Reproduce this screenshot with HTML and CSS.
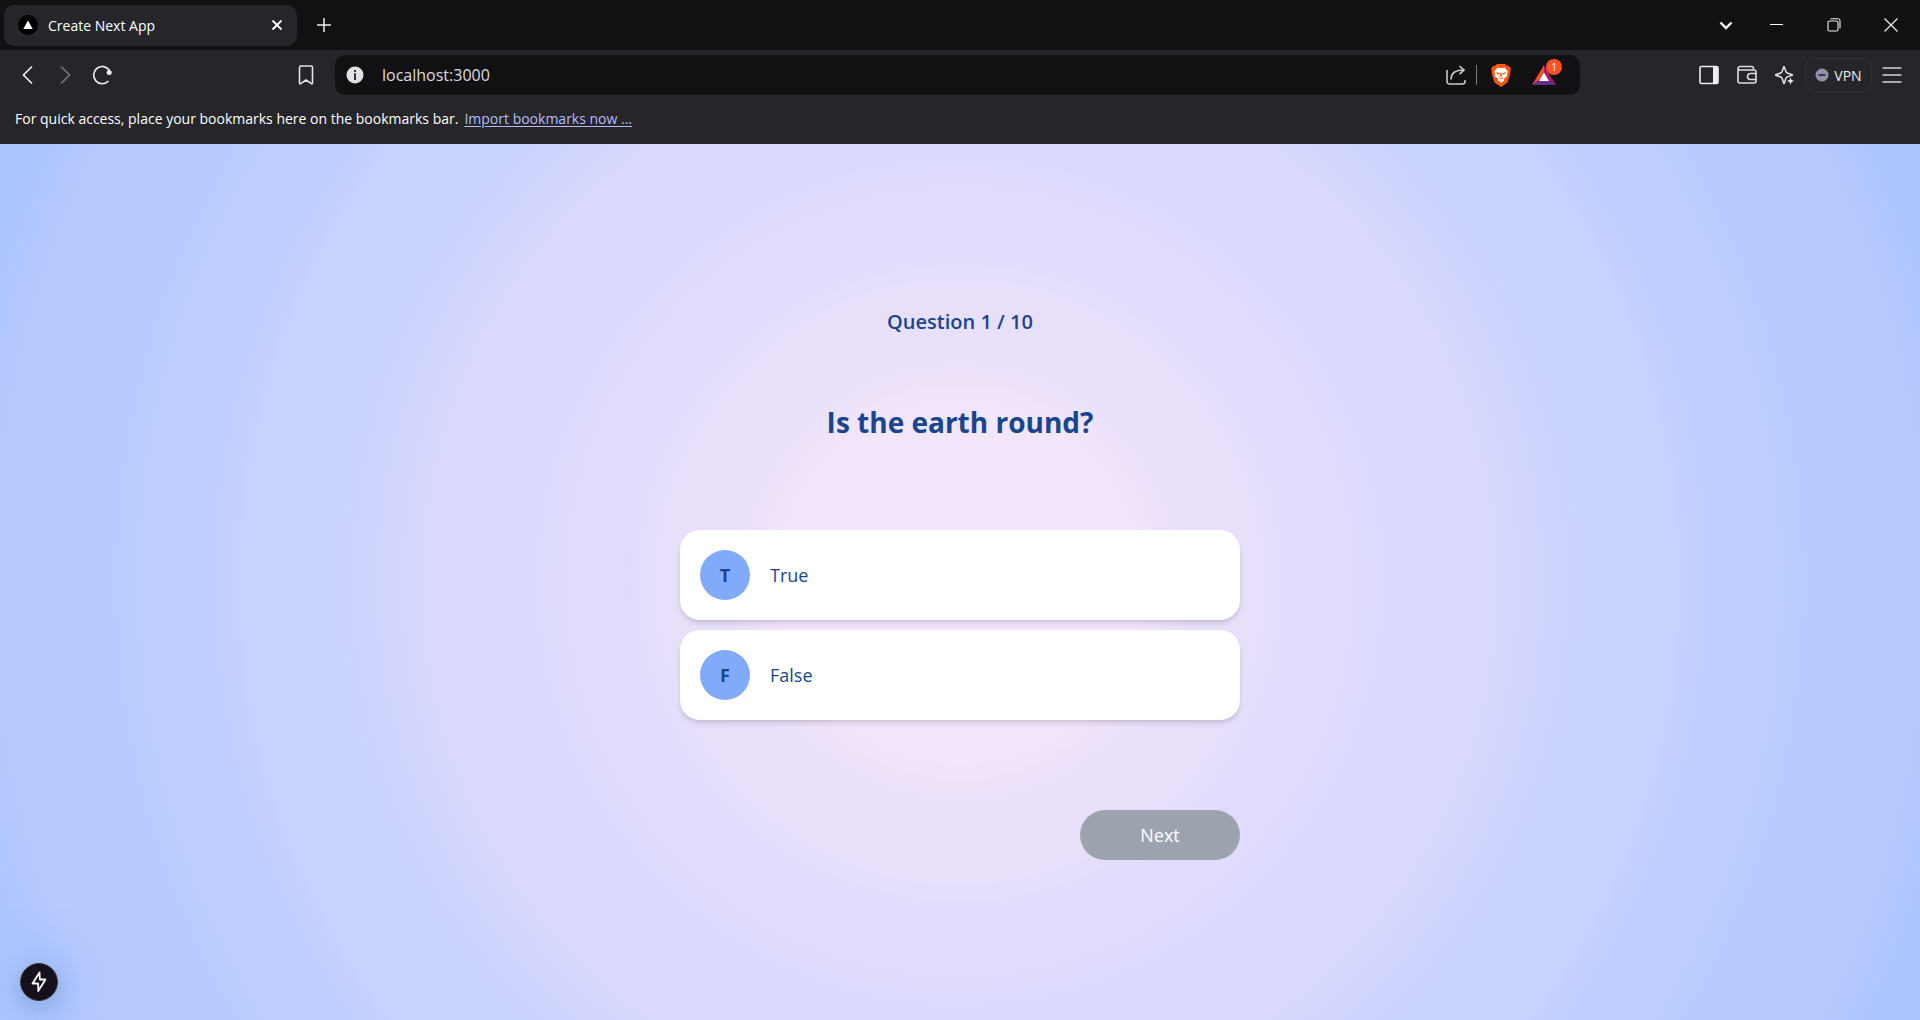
FILE: index.html
```html
<!DOCTYPE html>
<html lang="en">
<head>
<meta charset="utf-8">
<meta name="viewport" content="width=device-width, initial-scale=1">
<title>Create Next App</title>
<link rel="stylesheet" href="styles.css">
</head>
<body>
<header class="browser">
  <div class="tabstrip">
    <div class="tab">
      <svg class="favicon" width="20" height="20" viewBox="0 0 20 20"><circle cx="10" cy="10" r="10" fill="#000"/><path d="M10 5.500l4.700 8.500H5.300z" fill="#fff"/></svg>
      <span class="tab-title">Create Next App</span>
      <button class="icon-btn tab-close" aria-label="Close tab"><svg width="12" height="12" viewBox="0 0 12 12"><path d="M1.500 1.500l9 9m0-9l-9 9" stroke="#fff" stroke-width="1.800"/></svg></button>
    </div>
    <button class="icon-btn new-tab" aria-label="New tab"><svg width="14" height="14" viewBox="0 0 14 14"><path d="M7 0v14M0 7h14" stroke="#eee" stroke-width="1.500"/></svg></button>
    <div class="window-controls">
      <button class="icon-btn tab-search" aria-label="Search tabs"><svg width="14" height="14" viewBox="0 0 14 14"><path d="M1.500 4.500L7 10l5.500-5.500" fill="none" stroke="#fff" stroke-width="2.400"/></svg></button>
      <button class="icon-btn" aria-label="Minimize"><svg width="14" height="14" viewBox="0 0 14 14"><path d="M0 6.500h13" stroke="#fff"/></svg></button>
      <button class="icon-btn" aria-label="Restore"><svg width="14" height="14" viewBox="0 0 14 14"><g fill="none" stroke="#eee" stroke-width="1.100"><rect x="1" y="3" width="10" height="10" rx="1.500"/><path d="M3.500.8H11a2 2 0 0 1 2 2v7.700"/></g></svg></button>
      <button class="icon-btn" aria-label="Close window"><svg width="14" height="14" viewBox="0 0 14 14"><path d="M.5.5l13 13m0-13l-13 13" stroke="#eee" stroke-width="1.200"/></svg></button>
    </div>
  </div>
  <div class="toolbar">
    <nav class="nav-buttons">
      <button class="icon-btn" aria-label="Back"><svg width="20" height="20" viewBox="0 0 20 20"><path d="M14 1.500L5.500 10l8.500 8.500" fill="none" stroke="#eee" stroke-width="1.700"/></svg></button>
      <button class="icon-btn" aria-label="Forward"><svg width="20" height="20" viewBox="0 0 20 20"><path d="M6 1.500L14.500 10 6 18.500" fill="none" stroke="#757579" stroke-width="1.700"/></svg></button>
      <button class="icon-btn" aria-label="Reload"><svg width="20" height="20" viewBox="0 0 20 20"><path d="M17.500 5.500A8.600 8.600 0 1 0 16.500 16" fill="none" stroke="#eee" stroke-width="1.600"/><circle cx="17.200" cy="7.500" r="2.500" fill="#eee"/></svg></button>
    </nav>
    <button class="icon-btn bookmark" aria-label="Bookmark this page"><svg width="16" height="20" viewBox="0 0 16 20"><path d="M3 1h10a1.500 1.500 0 0 1 1.500 1.500v15.700a.7.7 0 0 1-1.100.5L8 15l-5.400 3.700a.7.700 0 0 1-1.100-.5V2.500A1.500 1.500 0 0 1 3 1z" fill="none" stroke="#e4e4e6" stroke-width="1.600"/></svg></button>
    <div class="address">
      <svg width="18" height="18" viewBox="0 0 18 18"><circle cx="9" cy="9" r="8.500" fill="#e2e2e6"/><path d="M8 4h2v2H8zM8 7.300h2V14H8z" fill="#333"/></svg>
      <input class="url" type="text" aria-label="Address" value="localhost:3000">
      <button class="icon-btn" aria-label="Share"><svg width="20" height="20" viewBox="0 0 20 20"><g fill="none" stroke="#c9cacc" stroke-width="1.600"><path d="M1 5v11.500A2.500 2.500 0 0 0 3.500 19h13a2.500 2.500 0 0 0 2.500-2.500V15"/><path d="M5 14.500C5 8.500 9 5 17.500 5M13.500 1l4.500 4-4.500 4.200"/></g></svg></button>
      <span class="divider"></span>
      <button class="icon-btn shield" aria-label="Brave Shields"><svg width="20" height="23" viewBox="0 0 20 23"><path d="M6 0h8l2 2 2-.3L20 5l-.8 2 .3 2-3 9.500L10 23l-6.500-4.500L.5 9l.3-2L0 5l2-3.300L4 2z" fill="#fb5411"/><path d="M6.500 3.600L10 4.200l3.500-.6 3.300 4-.8 2.500.3 1.800-3.300 2.800.2 1.800L10 18.700l-3.200-2.200.2-1.800-3.300-2.800.3-1.800-.8-2.500z" fill="#fff"/><path d="M4.700 8l4 1.200-.3 1.300-1.900-.3zM15.300 8l-4 1.200.3 1.300 1.900-.3zM9.400 9h1.200l.5 3.500H8.900zM7.500 13l2.500 1.200 2.500-1.200-.5 1.200-2 1-2-1z" fill="#fb5411"/></svg></button>
      <button class="icon-btn rewards" aria-label="Brave Rewards, 1 notification"><svg width="24" height="20" viewBox="0 0 24 20"><path d="M12 0L0 20l12-8z" fill="#ff4a24"/><path d="M12 0l12 20-12-8z" fill="#9e1f63"/><path d="M0 20l7-5h10l7 5z" fill="#662d91"/><path d="M12 7.500L17 16H7z" fill="#fff"/></svg><span class="badge">1</span></button>
    </div>
    <div class="tools">
      <button class="icon-btn" aria-label="Sidebar"><svg width="20" height="20" viewBox="0 0 20 20"><rect x="1" y="1.500" width="18" height="17" rx="1.500" fill="none" stroke="#eee" stroke-width="1.600"/><path d="M14 1.500h5v17h-5z" fill="#eee"/></svg></button>
      <button class="icon-btn" aria-label="Wallet"><svg width="20" height="20" viewBox="0 0 20 20"><g fill="none" stroke="#dedee0" stroke-width="1.600"><path d="M16.500 5V3.200A1.700 1.700 0 0 0 14.800 1.500H3A2 2 0 0 0 1 3.500V16a2 2 0 0 0 2 2h14a2 2 0 0 0 2-2V7a2 2 0 0 0-2-2H3a2 2 0 0 1-2-1.500"/><path d="M19 8.500h-5.500a3 3 0 0 0 0 6H19"/></g></svg></button>
      <button class="icon-btn" aria-label="Leo AI"><svg width="20" height="20" viewBox="0 0 20 20"><path d="M9 1.500c.8 0 1 4.500 2.500 6S17.500 9 17.500 10s-4.500 1-6 2.500-1.700 6-2.500 6-1-4.500-2.500-6-6-1.500-6-2.500 4.500-1 6-2.500 1.700-6 2.500-6z" fill="none" stroke="#e4e4e6" stroke-width="1.600"/><circle cx="15.500" cy="16" r="4.300" fill="#25252a"/><path d="M15.500 12.500l1 2.500 2.700 1-2.700 1-1 2.700-1-2.700-2.700-1 2.700-1z" fill="#eee"/></svg></button>
      <button class="vpn"><svg width="14" height="14" viewBox="0 0 14 14"><circle cx="7" cy="7" r="6.500" fill="#9192aa"/><path d="M3.500 7h7" stroke="#25252a" stroke-width="1.600"/></svg>VPN</button>
      <button class="icon-btn" aria-label="Menu"><svg width="20" height="20" viewBox="0 0 20 20"><path d="M.5 3h19M.5 10h19M.5 17h19" stroke="#d4d4d6" stroke-width="1.700"/></svg></button>
    </div>
  </div>
  <div class="bookmarks-bar">
    <span>For quick access, place your bookmarks here on the bookmarks bar.</span>
    <a href="#import">Import bookmarks now ...</a>
  </div>
</header>
<main class="quiz">
  <form class="quiz-form">
    <p class="progress">Question 1 / 10</p>
    <h1 class="question">Is the earth round?</h1>
    <div class="answers">
      <button type="button" class="answer"><span class="letter">T</span><span>True</span></button>
      <button type="button" class="answer"><span class="letter">F</span><span>False</span></button>
    </div>
    <button type="button" class="next" disabled>Next</button>
  </form>
  <button class="dev-indicator" aria-label="Next.js dev tools"><svg width="16" height="22" viewBox="0 0 16 22"><path d="M8.500 1.500L1.500 12.500h5.700v7.500L14.500 8.500H8.800z" fill="none" stroke="#fff" stroke-width="1.800" stroke-linejoin="round"/></svg></button>
</main>
</body>
</html>
```
FILE: styles.css
```css
* {
  box-sizing: border-box;
}

body {
  margin: 0;
  min-height: 100vh;
  display: flex;
  flex-direction: column;
  font-family: "Open Sans", "Noto Sans", sans-serif;
}

button {
  font: inherit;
  border: 0;
  padding: 0;
  cursor: pointer;
}

.icon-btn {
  display: flex;
  align-items: center;
  justify-content: center;
  background: none;
}

/* Browser chrome */
.browser {
  background: #25252a;
  color: #fff;
  font-size: 14px;
}

.tabstrip {
  display: flex;
  align-items: center;
  height: 50px;
  padding: 0 4px;
  background: #111113;
}

.tab {
  display: flex;
  align-items: center;
  gap: 10px;
  width: 293px;
  height: 41px;
  padding: 0 14px;
  border-radius: 10px;
  background: #25252a;
}

.tab-title {
  flex: 1;
}

.new-tab {
  margin-left: 20px;
}

.window-controls {
  display: flex;
  gap: 43px;
  margin-left: auto;
  padding-right: 18px;
}

.tab-search {
  margin-right: -6px;
}

.toolbar {
  display: flex;
  align-items: center;
  height: 50px;
  padding: 0 18px;
}

.nav-buttons {
  display: flex;
  gap: 17px;
}

.bookmark {
  margin-left: 186px;
}

.address {
  display: flex;
  align-items: center;
  flex: 1;
  height: 40px;
  margin-left: 21px;
  padding: 0 24px 0 11px;
  border-radius: 10px;
  background: #111113;
}

.url {
  flex: 1;
  min-width: 0;
  margin-left: 18px;
  padding: 0;
  border: 0;
  background: none;
  color: #dcdcde;
  font: inherit;
  font-size: 16px;
}

.divider {
  width: 1px;
  height: 20px;
  margin: 0 14px 0 10px;
  background: #77777b;
}

.rewards {
  position: relative;
  margin-left: 21px;
}

.badge {
  position: absolute;
  top: -6px;
  right: -6px;
  width: 16px;
  border-radius: 8px;
  background: #ff5028;
  color: #fff;
  font-size: 10px;
  line-height: 16px;
}

.tools {
  display: flex;
  align-items: center;
  gap: 18px;
  margin-left: 119px;
}

.vpn {
  display: flex;
  align-items: center;
  justify-content: center;
  gap: 5px;
  width: 67px;
  height: 34px;
  margin: 0 -8px;
  border: 1px solid #313136;
  border-radius: 10px;
  background: none;
  color: #eee;
}

.bookmarks-bar {
  display: flex;
  gap: 6px;
  height: 44px;
  padding: 0 15px;
  line-height: 38px;
}

.bookmarks-bar a {
  color: #b4bcfb;
  text-underline-offset: 2px;
}

/* Quiz page */
.quiz {
  position: relative;
  flex: 1;
  display: flex;
  justify-content: center;
  align-items: center;
  background: radial-gradient(circle, #f3e5fb 180px, #e9e0fb 235px, #e8e0fb 295px, #e1dcfd 335px, #e1dcfd 385px, #d9d9fd 440px, #d9d9fd 530px, #cad3fe 620px, #cad3fe 705px, #bfcefe 750px, #bfcefe 805px, #b8caff 850px, #b8caff 960px, #abc5ff 1020px);
  color: #17468f;
}

.quiz-form {
  display: flex;
  flex-direction: column;
  width: 560px;
  font-size: 18px;
}

.progress {
  margin: 0;
  padding-top: 2px;
  font-size: 20px;
  font-weight: 600;
  line-height: 32px;
  text-align: center;
}

.question {
  margin: 64px 0 88px;
  font-size: 28px;
  font-weight: 700;
  line-height: 40px;
  text-align: center;
}

.answers {
  display: flex;
  flex-direction: column;
  gap: 10px;
}

.answer {
  display: flex;
  align-items: center;
  gap: 20px;
  height: 90px;
  padding: 0 20px;
  border-radius: 20px;
  background: #fff;
  box-shadow: 0 4px 6px -1px rgb(0 0 0 / 12%), 0 2px 4px -2px rgb(0 0 0 / 12%);
  color: #17468f;
  font-weight: 500;
}

.letter {
  width: 50px;
  border-radius: 50%;
  background: #82aafa;
  font-weight: 700;
  line-height: 50px;
}

.next {
  align-self: flex-end;
  width: 160px;
  height: 50px;
  margin-top: 90px;
  border-radius: 25px;
  background: #9ca3af;
  color: #fff;
  font-weight: 500;
}

.dev-indicator {
  position: absolute;
  bottom: 19px;
  left: 20px;
  display: flex;
  align-items: center;
  justify-content: center;
  width: 38px;
  height: 38px;
  border: 1px solid #3b373b;
  border-radius: 50%;
  background: #15101c;
  box-shadow: 0 6px 18px 4px rgb(80 110 160 / 25%), 0 0 24px 30px rgb(168 195 253 / 70%);
}
```
